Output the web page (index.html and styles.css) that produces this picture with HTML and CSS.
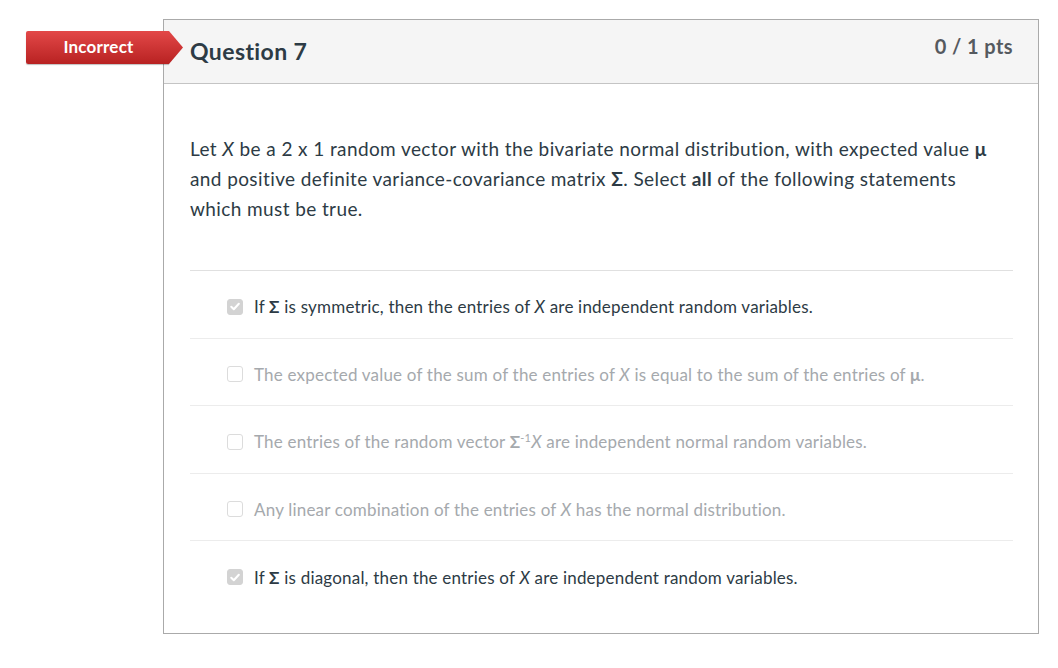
FILE: index.html
```html
<!DOCTYPE html>
<html>
<head>
<meta charset="utf-8">
<link rel="stylesheet" href="styles.css">
</head>
<body>
<div class="page">
  <div class="card">
    <div class="badge">
      <span class="badge-text">Incorrect</span>
      <svg class="badge-arrow" width="14" height="33" viewBox="0 0 14 33"><defs><linearGradient id="g" x1="0" y1="0" x2="0" y2="1"><stop offset="0" stop-color="#e34848"/><stop offset="1" stop-color="#b82222"/></linearGradient></defs><polygon points="0,0 0,33 14,16.5" fill="url(#g)"/></svg>
    </div>
    <div class="header">
      <h2 class="title">Question 7</h2>
      <div class="pts">0 / 1 pts</div>
    </div>
    <div class="body">
      <p class="question">Let <i>X</i> be a 2 x 1 random vector with the bivariate normal distribution, with expected value <b>μ</b> and positive definite variance-covariance matrix <b>Σ</b>. Select <b>all</b> of the following statements which must be true.</p>
      <div class="answers">
        <div class="answer selected">
          <span class="cb checked"><svg width="15" height="15" viewBox="0 0 15 15"><path d="M3.5 7.8 L6.2 10.4 L11.6 4.6" fill="none" stroke="#fff" stroke-width="2.2" stroke-linecap="round" stroke-linejoin="round"/></svg></span>
          <span class="label">If <b>Σ</b> is symmetric, then the entries of <i>X</i> are independent random variables.</span>
        </div>
        <div class="answer">
          <span class="cb"></span>
          <span class="label">The expected value of the sum of the entries of <i>X</i> is equal to the sum of the entries of <b>μ</b>.</span>
        </div>
        <div class="answer">
          <span class="cb"></span>
          <span class="label">The entries of the random vector <b>Σ</b><sup>-1</sup><i>X</i> are independent normal random variables.</span>
        </div>
        <div class="answer">
          <span class="cb"></span>
          <span class="label">Any linear combination of the entries of <i>X</i> has the normal distribution.</span>
        </div>
        <div class="answer selected">
          <span class="cb checked"><svg width="15" height="15" viewBox="0 0 15 15"><path d="M3.5 7.8 L6.2 10.4 L11.6 4.6" fill="none" stroke="#fff" stroke-width="2.2" stroke-linecap="round" stroke-linejoin="round"/></svg></span>
          <span class="label">If <b>Σ</b> is diagonal, then the entries of <i>X</i> are independent random variables.</span>
        </div>
      </div>
    </div>
  </div>
</div>
</body>
</html>
```

FILE: styles.css
```css
* { box-sizing: border-box; }
html, body { margin: 0; padding: 0; background: #fff; }
body {
  font-family: Lato, "Open Sans", sans-serif;
  color: #2d3b45;
}
.page {
  padding: 19px 0 0 163px;
}
.card {
  position: relative;
  width: 876px;
  height: 615px;
  border: 1px solid #aaaaaa;
  display: flex;
  flex-direction: column;
}
.badge {
  position: absolute;
  left: -138px;
  top: 11px;
  display: flex;
  align-items: stretch;
  height: 33px;
}
.badge-text {
  width: 143px;
  height: 33px;
  background: linear-gradient(#e34848, #b82222);
  color: #fff;
  font-weight: 700;
  font-size: 17px;
  letter-spacing: 0.2px;
  display: flex;
  align-items: center;
  justify-content: center;
  padding-left: 2px;
  padding-bottom: 2px;
  border-radius: 2px 0 0 2px;
  box-shadow: 0 1px 1px rgba(0,0,0,0.25);
}
.badge-arrow { display: block; }
.header {
  height: 64px;
  background: #f5f5f5;
  border-bottom: 1px solid #c4c4c4;
  display: flex;
  justify-content: space-between;
  align-items: flex-start;
  padding: 0 25px 0 26px;
}
.title {
  margin: 0;
  padding-top: 17px;
  font-size: 23px;
  font-weight: 700;
  color: #2d3b45;
  letter-spacing: 0.4px;
}
.pts {
  padding-top: 14px;
  font-size: 20px;
  font-weight: 700;
  color: #555a5f;
  letter-spacing: 0.4px;
}
.body {
  padding: 50px 25px 0 26px;
}
.question {
  margin: 0;
  font-size: 19px;
  line-height: 30px;
  letter-spacing: 0.4px;
  color: #2d3b45;
  padding-right: 10px;
}
.answers {
  margin-top: 46px;
  border-top: 1px solid #e0e0e0;
}
.answer {
  height: 67.5px;
  display: flex;
  align-items: center;
  padding-left: 37px;
  padding-top: 5px;
  border-bottom: 1px solid #ececec;
  font-size: 17px;
  letter-spacing: 0.2px;
  color: #a5a9ad;
}
.answer:last-child { border-bottom: none; }
.answer.selected { color: #2d3b45; }
.cb {
  width: 16px;
  height: 16px;
  border: 1px solid #dcdcdc;
  border-radius: 3px;
  background: #fff;
  margin-right: 11px;
  flex: none;
  display: flex;
  align-items: center;
  justify-content: center;
}
.cb.checked {
  background: #d3d3d3;
  border-color: #d3d3d3;
}
.cb svg { display: block; }
.label sup { font-size: 11px; line-height: 0; vertical-align: 6px; }
```
